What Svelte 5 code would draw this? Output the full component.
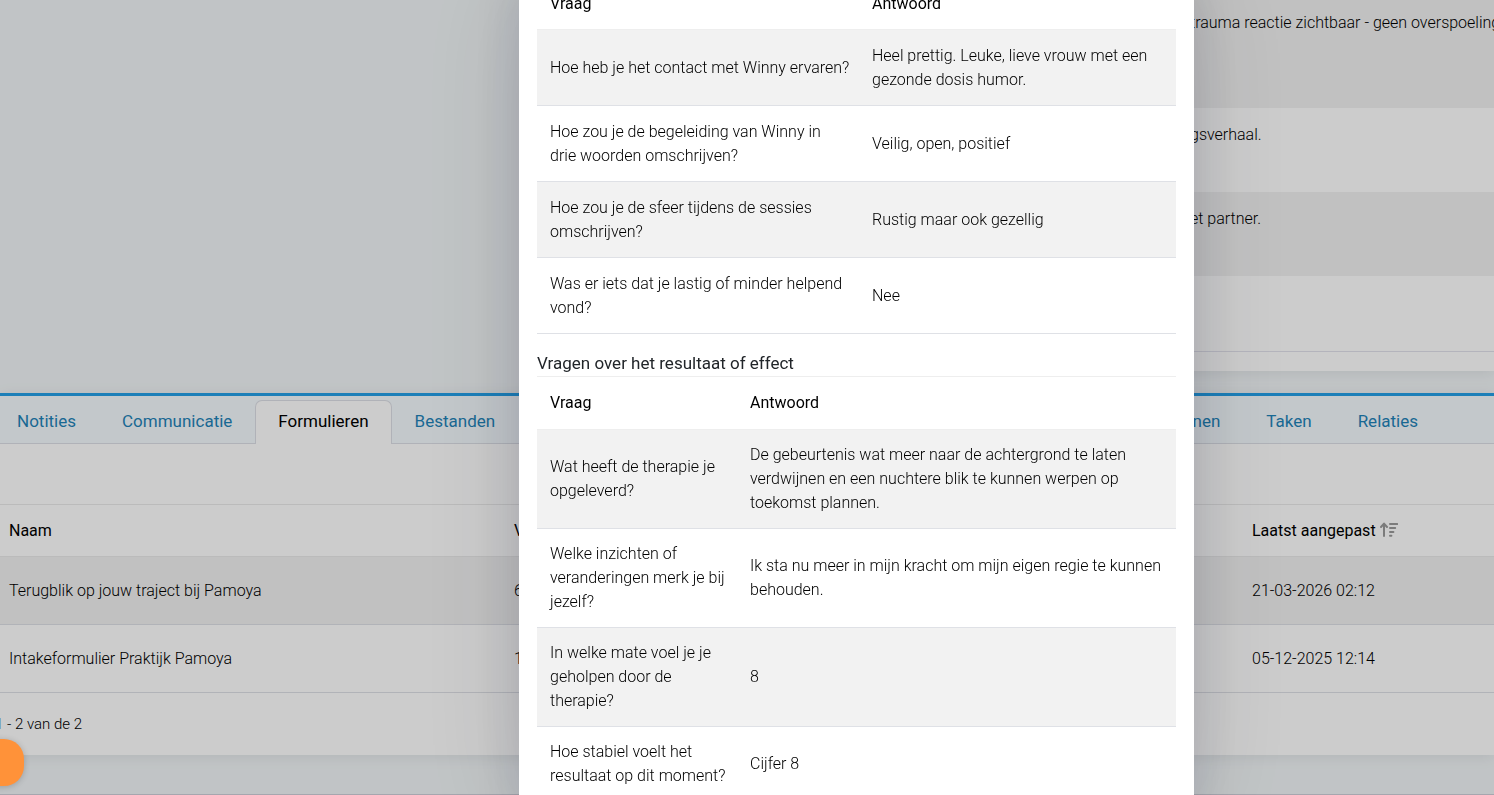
<script lang="ts">
  interface Answer {
    question: string;
    answer: string;
  }

  interface Section {
    title: string;
    layout: "even" | "narrow";
    answers: Answer[];
  }

  const sections: Section[] = [
    {
      title: "",
      layout: "even",
      answers: [
        { question: "Hoe heb je het contact met Winny ervaren?", answer: "Heel prettig. Leuke, lieve vrouw met een gezonde dosis humor." },
        { question: "Hoe zou je de begeleiding van Winny in drie woorden omschrijven?", answer: "Veilig, open, positief" },
        { question: "Hoe zou je de sfeer tijdens de sessies omschrijven?", answer: "Rustig maar ook gezellig" },
        { question: "Was er iets dat je lastig of minder helpend vond?", answer: "Nee" },
      ],
    },
    {
      title: "Vragen over het resultaat of effect",
      layout: "narrow",
      answers: [
        { question: "Wat heeft de therapie je opgeleverd?", answer: "De gebeurtenis wat meer naar de achtergrond te laten verdwijnen en een nuchtere blik te kunnen werpen op toekomst plannen." },
        { question: "Welke inzichten of veranderingen merk je bij jezelf?", answer: "Ik sta nu meer in mijn kracht om mijn eigen regie te kunnen behouden." },
        { question: "In welke mate voel je je geholpen door de therapie?", answer: "8" },
        { question: "Hoe stabiel voelt het resultaat op dit moment?", answer: "Cijfer 8" },
      ],
    },
  ];

  const notes = ["trauma reactie zichtbaar - geen overspoeling", "gsverhaal.", "et partner.", ""];

  const tabs = ["Notities", "Communicatie", "Formulieren", "Bestanden"];
  const moreTabs = ["nen", "Taken", "Relaties"];
  let activeTab = $state("Formulieren");

  const forms = [
    { name: "Terugblik op jouw traject bij Pamoya", filled: "6", changed: "21-03-2026 02:12" },
    { name: "Intakeformulier Praktijk Pamoya", filled: "1", changed: "05-12-2025 12:14" },
  ];
</script>

{#snippet tabButton(tab: string)}
  <button type="button" class="tab" class:active={tab === activeTab} onclick={() => (activeTab = tab)}>{tab}</button>
{/snippet}

<main class="page">
  <section class="notes">
    <table>
      <tbody>
        {#each notes as note}
          <tr><td>{note}</td></tr>
        {/each}
      </tbody>
    </table>
  </section>

  <section class="panel">
    <nav class="tabs">
      <div class="tab-group">
        {#each tabs as tab}
          {@render tabButton(tab)}
        {/each}
      </div>
      <div class="tab-group">
        {#each moreTabs as tab}
          {@render tabButton(tab)}
        {/each}
      </div>
    </nav>

    <div class="toolbar"></div>

    <table class="forms">
      <colgroup>
        <col class="col-name" />
        <col class="col-filled" />
        <col />
      </colgroup>
      <thead>
        <tr>
          <th>Naam</th>
          <th>V</th>
          <th>
            Laatst aangepast
            <svg class="sort" viewBox="0 0 18 15" width="18" height="15" aria-hidden="true">
              <path d="M4 14V2M1 5l3-3.4L7 5" fill="none" stroke="currentColor" stroke-width="2" stroke-linecap="round" stroke-linejoin="round" />
              <path d="M10 2h7.2M10 6h5.2M10 10h3.4M10 13.8h1.4" fill="none" stroke="currentColor" stroke-width="2" stroke-linecap="round" />
            </svg>
          </th>
        </tr>
      </thead>
      <tbody>
        {#each forms as form}
          <tr>
            <td>{form.name}</td>
            <td>{form.filled}</td>
            <td>{form.changed}</td>
          </tr>
        {/each}
      </tbody>
    </table>
    <p class="paging">1 - 2 van de 2</p>
  </section>
  <footer></footer>
</main>

<div class="backdrop">
  <div class="modal" role="dialog" aria-label="Terugblik op jouw traject bij Pamoya">
    {#each sections as section}
      {#if section.title}
        <h2>{section.title}</h2>
      {/if}
      <table class="answers {section.layout}">
        <thead>
          <tr>
            <th>Vraag</th>
            <th>Antwoord</th>
          </tr>
        </thead>
        <tbody>
          {#each section.answers as row}
            <tr>
              <td>{row.question}</td>
              <td>{row.answer}</td>
            </tr>
          {/each}
        </tbody>
      </table>
    {/each}
  </div>
</div>

<button type="button" class="chat" aria-label="Chat"></button>

<style>
  :global(body) {
    margin: 0;
    background: #f2f6f8;
    color: #000;
    font: 300 16px/24px Roboto, sans-serif;
    overflow: hidden;
  }

  table { width: 100%; border-collapse: separate; border-spacing: 0; }
  th, td { box-sizing: border-box; padding: 0; text-align: left; }
  th { font-weight: 400; }
  tbody tr:nth-child(odd) { background: #f2f2f2; }

  .notes {
    margin: -4px 0 22px 620px;
    padding-bottom: 19px;
    background: #fff;
    box-shadow: 0 2px 14px rgba(0, 0, 0, 0.08);
  }
  .notes td { height: 84px; padding: 15px 0 0 570px; vertical-align: top; white-space: nowrap; }
  .notes tr:first-child td { height: 112px; }
  .notes tr:last-child td { height: 76px; border-bottom: 1px solid #e2e2ec; }

  .panel { background: #fff; border-top: 3px solid #239fe7; box-shadow: 0 2px 14px rgba(0, 0, 0, 0.08); }

  .tabs {
    display: flex;
    justify-content: space-between;
    align-items: flex-end;
    height: 47px;
    padding: 0 53px 0 0;
    background: #f4fafe;
    border-bottom: 1px solid #dcdfe6;
  }
  .tab-group { display: flex; margin: 0 0 -1px -6px; }
  .tab {
    height: 44px;
    padding: 0 22px 4px;
    border: 1px solid transparent;
    border-bottom: 0;
    border-radius: 7px 7px 0 0;
    background: none;
    color: #1f83b8;
    font: 400 17px/24px Roboto, sans-serif;
    cursor: pointer;
  }
  .tab.active { background: #fff; border-color: #dcdfe6; color: #000; }

  .toolbar { height: 60px; }

  .forms { table-layout: fixed; }
  .col-name { width: 505px; }
  .col-filled { width: 738px; }
  .forms th { height: 53px; padding-left: 9px; border: 1px solid #eaeaea; border-width: 1px 0; }
  .forms td { height: 68px; padding-left: 9px; border-bottom: 1px solid #dee0e6; }
  .sort { color: #9a9a9a; vertical-align: -1px; }

  .paging { margin: 0 0 0 -5px; padding: 19px 0; font-size: 15px; }

  footer { height: 39px; border-bottom: 1px solid #d0d0da; }

  .backdrop {
    position: fixed;
    inset: 0;
    display: flex;
    justify-content: center;
    align-items: flex-start;
    padding-left: 219px;
    background: rgba(0, 0, 0, 0.2);
    overflow: hidden;
  }
  /* the dialog is scrolled past its top edge */
  .modal {
    box-sizing: border-box;
    width: 675px;
    margin-top: -22px;
    padding: 0 18px 18px;
    background: #fff;
    box-shadow: 0 0 50px rgba(20, 25, 50, 0.14), 0 0 110px rgba(20, 25, 50, 0.12);
  }
  h2 {
    margin: 18px 0 0;
    border-bottom: 1px solid #eee;
    color: #212529;
    font-size: 17px;
    font-weight: 400;
    line-height: 26px;
  }

  .answers { table-layout: fixed; }
  .answers th { height: 53px; padding: 0 13px; border-bottom: 1px solid #eee; }
  .answers td { padding: 13px 9px 13px 13px; border-bottom: 1px solid #dfe1e6; }
  .even td { padding-top: 14px; }
  .even th:first-child { width: 322px; }
  .narrow th:first-child { width: 200px; }
  .even th { height: 52px; }
  .even + h2 { margin-top: 16px; }

  .chat {
    position: fixed;
    left: -24px;
    bottom: 9px;
    width: 48px;
    height: 47px;
    border: 0;
    border-radius: 20px;
    background: #ff9239;
    box-shadow: 0 1px 6px rgba(0, 0, 0, 0.2);
    cursor: pointer;
  }
</style>
